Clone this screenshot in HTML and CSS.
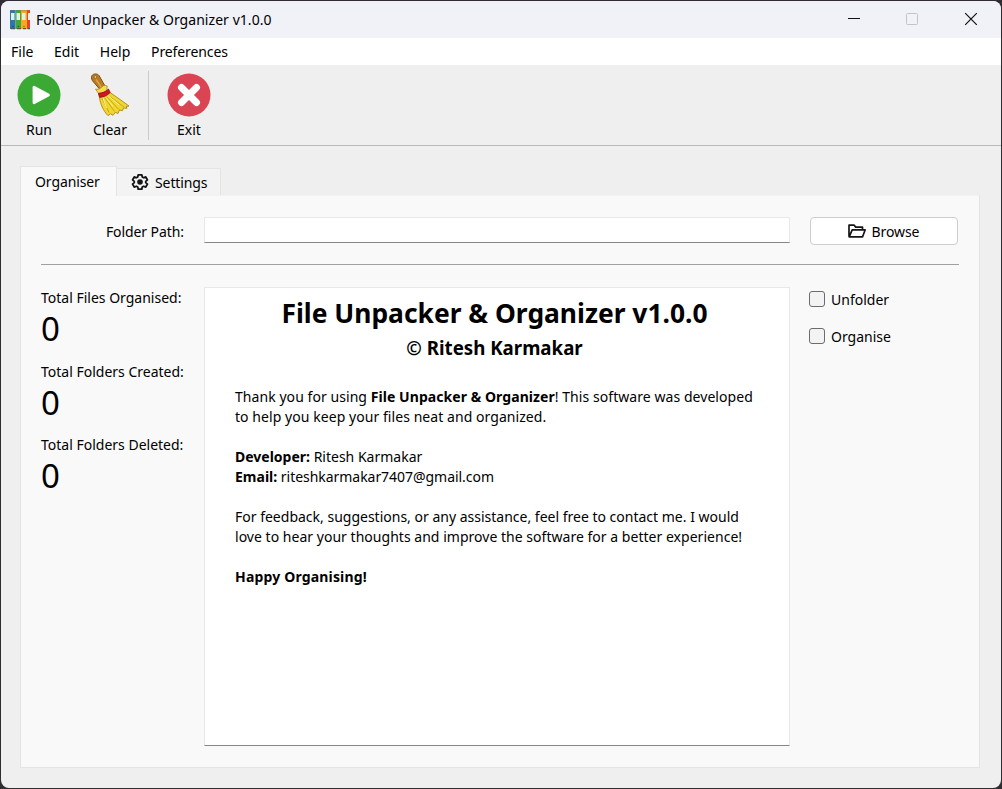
FILE: index.html
```html
<!DOCTYPE html>
<html lang="en">
<head>
<meta charset="utf-8">
<title>Folder Unpacker &amp; Organizer v1.0.0</title>
<link rel="stylesheet" href="styles.css">
</head>
<body>
<div class="window">
  <header class="titlebar">
    <svg class="app-icon" width="20" height="20" viewBox="0 0 20 20">
      <rect width="5.500" height="19" fill="#2f74ad"/><rect x="5.500" width="5.500" height="19" fill="#43a83c"/>
      <rect x="11" width="6" height="19" fill="#f9a91c"/><rect x="17" width="3" height="19" fill="#e8432e"/>
      <path d="M1 3h3.500v7H1zM6.500 3H10v7H6.500zM12 3h3.500v7H12zM18 3h2v7h-2z" fill="#d9f3ee"/>
      <path d="M0 0h20v1.200H0z" fill="#777" opacity=".35"/>
      <path d="M1 18h4v1.200H1zM7 18h4v1.200H7zM13 18h3v1.200h-3zM18 18h2v1.200h-2z" fill="#555"/>
      <circle cx="3" cy="16.500" r=".8" fill="#174c78"/><circle cx="8.500" cy="16.500" r=".8" fill="#1b6324"/><circle cx="14" cy="16.500" r=".8" fill="#a66d08"/>
    </svg>
    <span class="title">Folder Unpacker &amp; Organizer v1.0.0</span>
    <svg class="controls" width="132" height="14" viewBox="0 0 132 14" fill="none">
      <path d="M0 6.500h12" stroke="#111"/>
      <rect x="58.500" y="1.500" width="11" height="11" rx="1" stroke="#c2c3c8"/>
      <path d="M117.200 1.200l11.600 11.600M128.800 1.200l-11.600 11.600" stroke="#111" stroke-width="1.200"/>
    </svg>
  </header>
  <nav class="menubar"><span>File</span><span>Edit</span><span>Help</span><span class="m-pref">Preferences</span></nav>
  <div class="toolbar">
    <div class="tool run">
      <svg width="44" height="44" viewBox="0 0 44 44"><circle cx="22" cy="22" r="21.500" fill="#3aaa35"/><path d="M17 14.200v15.600l14.500-7.800z" fill="#fff" stroke="#fff" stroke-width="2.800" stroke-linejoin="round"/></svg>
      <span>Run</span>
    </div>
    <div class="tool clear">
      <svg width="44" height="44" viewBox="0 0 44 44">
        <path d="M4 2.500C5.500.400 9.500.400 11 2.500L17 13l-5.500 3L4.300 7.500C3.300 5.500 3.200 4 4 2.500z" fill="#b97a20" stroke="#80500f"/>
        <path d="M8 6.500l5.500 8" stroke="#daa34e" stroke-width="1.500"/>
        <circle cx="7.300" cy="4" r="1.200" fill="#efefef" stroke="#80500f" stroke-width=".7"/>
        <path d="M7.500 16l3 .500 5-3.800 2-.200 1.700.500-.500 4.500 3.500 3.500-10 4-1.700-4.500z" fill="#f6dc4e" stroke="#aa8a16" stroke-width=".8"/>
        <path d="M11.500 24.500l10.500-5 10 7 9 6.500-3 .800 1 1.500-3.500-.300-1 2.700-3-.700-1.500 3.500-2.700-1.200-2.300 3-2.500-1.500-2.500 1.800c-5-5-7.500-11.500-8.500-18.100z" fill="#f2d62f" stroke="#a88912" stroke-width=".9"/>
        <path d="M14 25l7 14.500M16.500 24.500l10 14M18.500 23.500l12.500 13.200M20.500 22.500l15.500 11.500" stroke="#b89917" stroke-width=".8" fill="none"/>
        <path d="M15 25l3.500 10M18 24.500l7 9M20 22.500l11 9.500" stroke="#fff391" stroke-width="1" fill="none"/>
        <path d="M10.500 20.300c4-.300 7-1.500 10-4.200l1.700 3.400c-3 3-6.500 4.700-10.700 4.800z" fill="#d21627" stroke="#8b0b16" stroke-width=".8"/>
      </svg>
      <span>Clear</span>
    </div>
    <div class="tool exit">
      <svg width="44" height="44" viewBox="0 0 44 44"><circle cx="22" cy="22" r="21.500" fill="#da4453"/><path d="M14.500 14.500l15 15M29.500 14.500l-15 15" stroke="#fff" stroke-width="7" stroke-linecap="round"/></svg>
      <span>Exit</span>
    </div>
  </div>
  <main class="content">
    <div class="tabs">
      <div class="tab active"><span>Organiser</span></div>
      <div class="tab idle">
        <svg width="18" height="18" viewBox="0 0 18 18"><path d="M7 1h4l.500 2.500 1.500.800 2.400-.900 1.900 3.300-1.900 1.600v1.400l1.900 1.600-1.900 3.300-2.400-.900-1.500.800L11 17H7l-.500-2.500-1.500-.800-2.400.900L.700 11.300l1.900-1.600V8.300L.700 6.700l1.900-3.300 2.400.900 1.500-.800z" transform="translate(.9 .9) scale(.9)" fill="none" stroke="#151515" stroke-width="2" stroke-linejoin="round"/><circle cx="9" cy="9" r="2.800" fill="#151515"/></svg>
        <span>Settings</span>
      </div>
    </div>
    <section class="pane">
      <div class="path-row">
        <label class="path-label">Folder Path:</label>
        <div class="path-input"></div>
        <div class="browse">
          <svg width="18" height="14" viewBox="0 0 18 14"><path d="M1 12.500V1.200h5.200l1.500 1.900h6.800v2.700M1.200 12.800L4.200 5.800h13l-2.600 7z" fill="none" stroke="#151515" stroke-width="1.700" stroke-linejoin="round"/></svg>
          <span>Browse</span>
        </div>
      </div>
      <div class="body-row">
        <div class="stats">
          <div class="stat"><span>Total Files Organised:</span><b>0</b></div>
          <div class="stat"><span>Total Folders Created:</span><b>0</b></div>
          <div class="stat"><span>Total Folders Deleted:</span><b>0</b></div>
        </div>
        <article class="about">
          <h1>File Unpacker &amp; Organizer v1.0.0</h1>
          <h2>© Ritesh Karmakar</h2>
          <p><span class="intro">Thank you for using <strong>File Unpacker &amp; Organizer</strong>! This software was developed</span><br><span class="intro">to help you keep your files neat and organized.</span></p>
          <p><strong>Developer:</strong> Ritesh Karmakar<br><strong>Email:</strong> <span class="email">riteshkarmakar7407@gmail.com</span></p>
          <p>For feedback, suggestions, or any assistance, feel free to contact me. I would<br><span class="closing">love to hear your thoughts and improve the software for a better experience!</span></p>
          <p><strong class="signoff">Happy Organising!</strong></p>
        </article>
        <div class="options">
          <label><i></i><span>Unfolder</span></label>
          <label><i></i><span>Organise</span></label>
        </div>
      </div>
    </section>
  </main>
</div>
</body>
</html>
```
FILE: styles.css
```css
* { box-sizing: border-box; }
html, body { margin: 0; height: 789px; overflow: hidden; }
body { background: #2f2d31; padding: 1px; font: 14px/20px "Noto Sans", "Open Sans", sans-serif; color: #000; white-space: nowrap; }
.window { width: 1000px; height: 787px; border-radius: 8px; overflow: hidden; background: #efefef; display: flex; flex-direction: column; }
.titlebar { height: 37px; background: #f1f2f8; display: flex; align-items: center; padding: 0 21px 0 9px; }
.app-icon { margin-right: 6px; }
.title { flex: 1; letter-spacing: 0.05px; }
.controls { margin-bottom: 2px; }
.menubar { height: 27px; background: #fff; display: flex; gap: 20.7px; padding: 4px 0 0 10px; }
.m-pref { letter-spacing: -0.1px; }
.toolbar { height: 81px; border-bottom: 1px solid #b9b9b9; display: flex; padding: 6px 0 0 8px; }
.tool { width: 60px; height: 69px; display: flex; flex-direction: column; align-items: center; padding-top: 2px; }
.tool span { margin-top: 3px; }
.clear { width: 80px; padding-left: 3px; border-right: 1px solid #cbcbcb; }
.exit { width: 80px; }
.content { padding: 20px 19px 0; }
.tabs { display: flex; align-items: flex-end; height: 29px; }
.tab { display: flex; align-items: center; border: 1px solid #e4e4e4; border-bottom: 0; letter-spacing: -0.1px; }
.active { width: 97px; height: 30px; background: #f9f9f9; padding-left: 14px; margin-bottom: -1px; z-index: 1; }
.idle { width: 104px; height: 27px; background: #f3f3f3; border-left: 0; padding-left: 14px; gap: 6px; }
.idle svg { margin-bottom: 1px; }
.idle span { padding-top: 2px; }
.pane { width: 960px; height: 573px; background: #f9f9f9; border: 1px solid #e4e4e4; border-top-color: #f3f3f3; padding: 21px 20px 0; }
.path-row { display: flex; height: 48px; border-bottom: 1px solid #a0a0a0; }
.path-label { width: 143px; text-align: right; padding-top: 5px; letter-spacing: -0.08px; }
.path-input { width: 586px; height: 26px; margin-left: 20px; background: #fff; border: 1px solid #e8e8e8; border-bottom-color: #868686; }
.browse { width: 148px; height: 28px; margin-left: 20px; background: #fff; border: 1px solid #cdcdcd; border-radius: 4px; display: flex; align-items: center; justify-content: center; gap: 6px; padding-right: 1px; }
.browse span { padding-top: 2px; letter-spacing: -0.1px; }
.body-row { display: flex; padding-top: 22px; }
.stats { width: 163px; padding-top: 1px; }
.stat { height: 73.5px; display: flex; flex-direction: column; }
.stat b { font-weight: 400; font-size: 33px; line-height: 42px; }
.about { width: 586px; height: 459px; background: #fff; border: 1px solid #e8e8e8; border-bottom-color: #868686; padding: 4px 30px 0; }
h1, h2 { margin: 0; text-align: center; font-weight: 700; padding-right: 5px; }
h1 { font-size: 26.4px; line-height: 42px; }
h2 { font-size: 18.7px; line-height: 28px; margin-bottom: 25px; }
p { margin: 0 0 20px; }
.intro { letter-spacing: 0.06px; }
.email { letter-spacing: -0.04px; }
.closing { letter-spacing: 0.025px; }
.signoff { letter-spacing: 0.17px; }
.options { padding-left: 19px; }
.options label { display: flex; align-items: center; height: 38px; }
.options label:first-child { height: 24px; margin-bottom: 6px; }
.options i { width: 16px; height: 16px; border: 1px solid #6c6c6c; border-radius: 3px; background: #f3f3f3; margin-right: 6px; }
.options span { padding-top: 2px; }
```
